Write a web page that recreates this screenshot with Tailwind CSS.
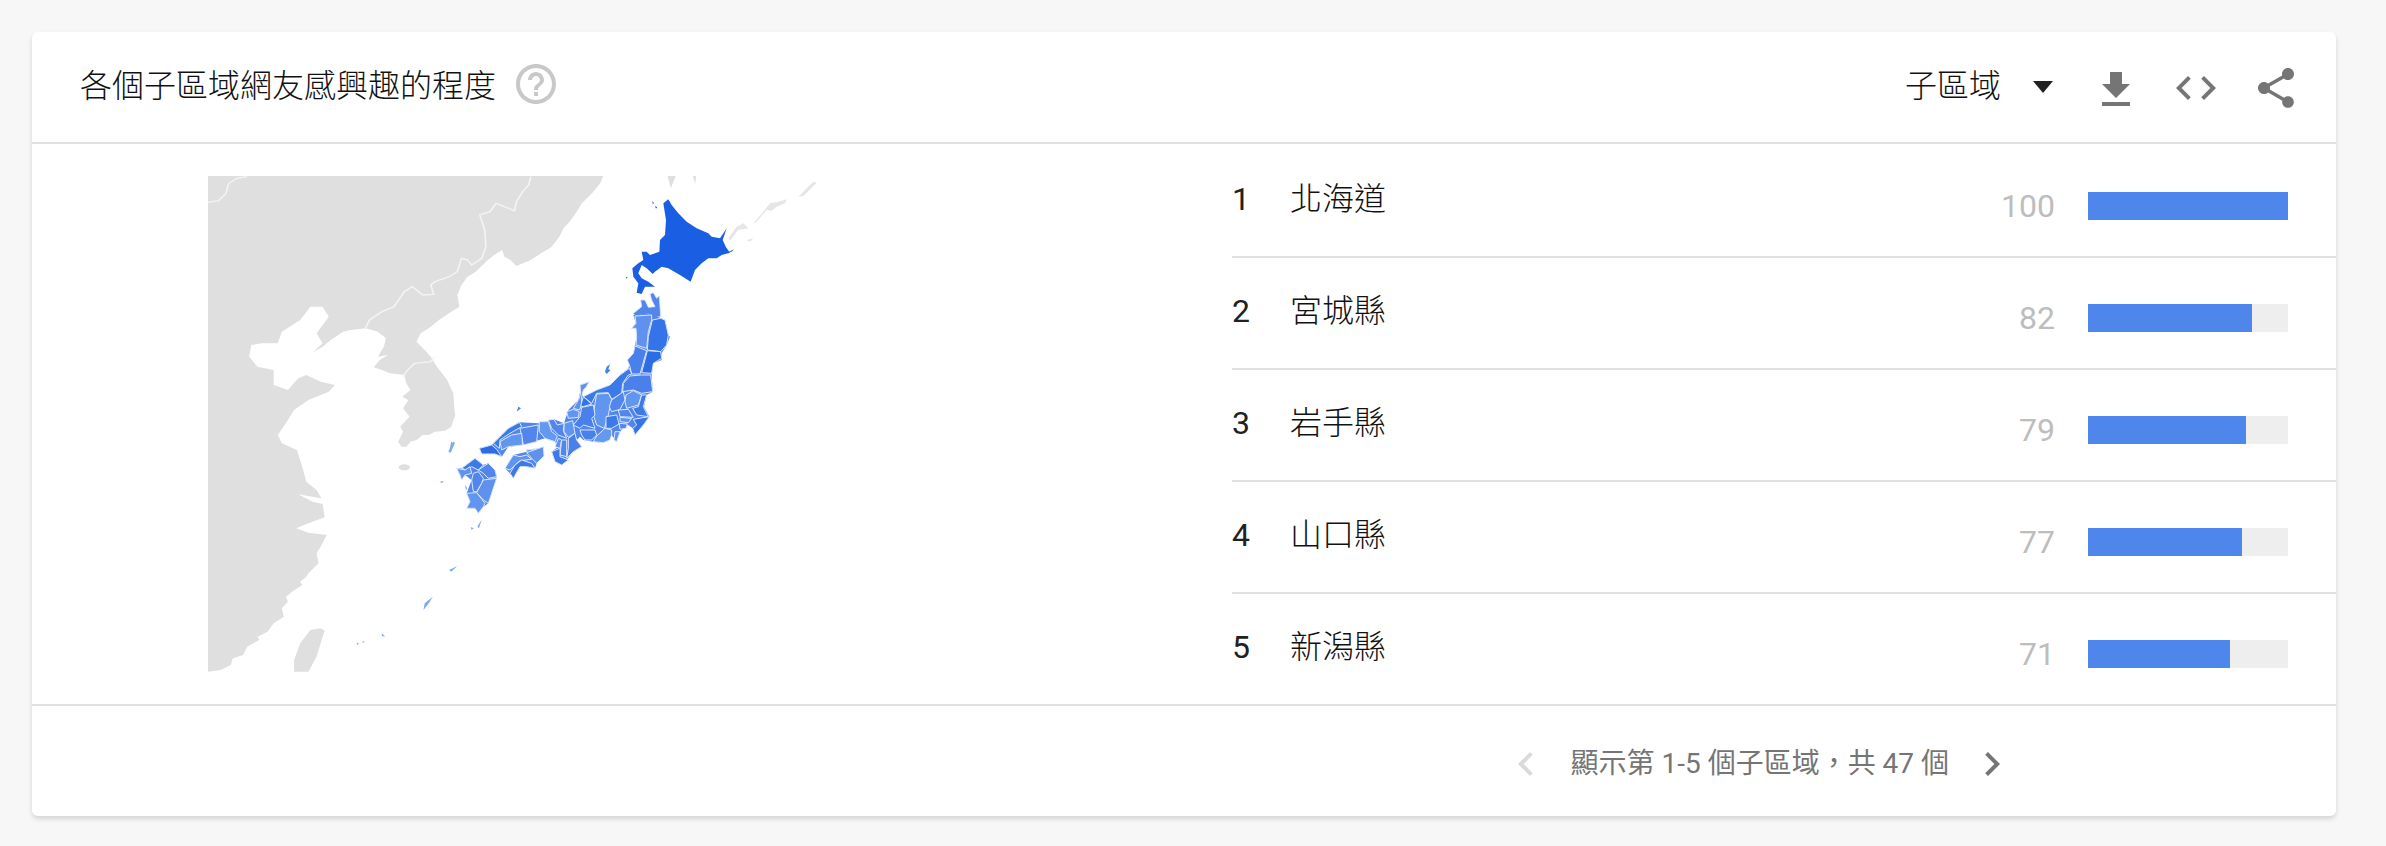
<!DOCTYPE html>
<html lang="zh-Hant">
<head>
    <meta charset="UTF-8">
    <title>各個子區域網友感興趣的程度</title>
    <script src="https://cdn.jsdelivr.net/npm/@tailwindcss/browser@4"></script>
</head>
<body class="bg-[#f7f7f7] font-['Roboto','Noto_Sans_CJK_TC',sans-serif] text-[#212121]">
    <main class="p-[32px]">
        <section class="w-[2304px] h-[784px] bg-white rounded-[6px] shadow-[0_3px_5px_rgba(0,0,0,0.14)]">
            <!-- header -->
            <header class="flex h-[112px] border-b-2 border-[#e0e0e0] pl-[48px] pr-[36px]">
                <h2 class="text-[32px] leading-[48px] font-light text-[#111111] mt-[30px]">各個子區域網友感興趣的程度</h2>
                <svg class="w-[48px] h-[48px] ml-[16px] mt-[28px] fill-[#c8c8c8]" viewBox="0 0 24 24"><path d="M11 18h2v-2h-2v2zm1-16C6.48 2 2 6.48 2 12s4.48 10 10 10 10-4.48 10-10S17.52 2 12 2zm0 18c-4.41 0-8-3.59-8-8s3.59-8 8-8 8 3.59 8 8-3.59 8-8 8zm0-14c-2.21 0-4 1.79-4 4h2c0-1.1.9-2 2-2s2 .9 2 2c0 2-3 1.75-3 5h2c0-2.25 3-2.5 3-5 0-2.21-1.79-4-4-4z"/></svg>
                <div class="ml-auto flex items-start pt-[32px]">
                    <span class="text-[32px] leading-[48px] font-light text-[#111111] -mt-[2px]">子區域</span>
                    <svg class="w-[48px] h-[48px] ml-[18px] -mt-[2px] fill-[#212121]" viewBox="0 0 24 24"><path d="M7 9.5l5 6 5-6z"/></svg>
                    <svg class="w-[48px] h-[48px] ml-[25px] mt-[2px] fill-[#757575]" viewBox="0 0 24 24"><path d="M19 9h-4V3H9v6H5l7 7 7-7zM5 18v2h14v-2H5z"/></svg>
                    <svg class="w-[48px] h-[48px] ml-[32px] fill-[#757575]" viewBox="0 0 24 24"><path d="M9.4 16.6L4.8 12l4.6-4.6L8 6l-6 6 6 6 1.4-1.4zm5.2 0l4.6-4.6-4.6-4.6L16 6l6 6-6 6-1.4-1.4z"/></svg>
                    <svg class="w-[48px] h-[48px] ml-[32px] fill-[#757575]" viewBox="0 0 24 24"><path d="M18 16.08c-.76 0-1.44.3-1.96.77L8.91 12.7c.05-.23.09-.46.09-.7s-.04-.47-.09-.7l7.05-4.11c.54.5 1.25.81 2.04.81 1.66 0 3-1.34 3-3s-1.34-3-3-3-3 1.34-3 3c0 .24.04.47.09.7L8.04 9.81C7.5 9.31 6.79 9 6 9c-1.66 0-3 1.34-3 3s1.34 3 3 3c.79 0 1.5-.31 2.04-.81l7.12 4.16c-.05.21-.08.43-.08.65 0 1.61 1.31 2.92 2.92 2.92 1.61 0 2.92-1.31 2.92-2.92s-1.31-2.92-2.92-2.92z"/></svg>
                </div>
            </header>

            <div class="flex h-[562px] border-b-2 border-[#e0e0e0]">
                <!-- map -->
                <div class="w-[1200px] pl-[158px] pt-[16px]">
                    <svg class="block" width="640" height="520" viewBox="190 160 640 520">
                        <!-- surrounding countries, traced at 2.45 x 3 -->
                        <g transform="translate(190 160) scale(0.40816 0.33333)">
                            <path fill="#dfdfdf" d="M44 48L1012 48L1005 70L985 100L960 130L945 160L930 185L915 205L905 230L885 262L860 280L835 300L800 318L785 300L770 290L765 270L745 285L730 300L700 335L680 350L665 375L655 405L660 440L640 455L610 480L585 505L565 520L555 545L575 570L590 590L605 620L630 660L645 700L648 750L650 765L640 800L625 812L600 815L585 825L570 825L555 840L540 845L530 860L518 860L510 845L522 815L515 800L530 780L538 770L522 745L535 720L520 710L540 690L530 670L525 645L490 640L470 630L450 622L465 600L485 585L460 590L475 560L480 535L460 515L430 505L395 510L375 515L345 540L325 560L300 578L325 550L310 520L340 470L325 440L295 440L270 480L225 515L215 550L175 550L150 555L145 590L165 620L205 630L205 675L240 690L265 655L285 645L320 665L355 675L340 695L290 720L255 750L235 790L215 825L225 850L262 870L275 920L285 965L310 990L322 1015L265 1003L300 1025L325 1032L330 1072L300 1085L260 1105L290 1118L335 1125L320 1160L310 1180L315 1210L290 1240L285 1250L270 1265L275 1275L250 1295L235 1310L240 1325L225 1345L230 1370L205 1390L190 1415L165 1430L170 1440L140 1460L130 1485L105 1495L100 1515L75 1530L44 1535Z"/>
                            <path fill="#dfdfdf" d="M320 1405L330 1412L325 1430L310 1490L290 1535L255 1535L255 1500L270 1450L295 1410Z"/>
                            <ellipse fill="#dfdfdf" cx="525" cy="922" rx="14" ry="9"/>
                            <path fill="#dfdfdf" d="M1170 48L1190 48L1178 85ZM1232 48L1240 48L1238 72Z"/>
                            <g fill="none" stroke="#f4f4f4" stroke-width="4">
                                <path d="M44 127L70 122L88 100L95 70L115 55L140 50"/>
                                <path d="M835 50L830 75L815 95L800 125L795 152L750 130L735 155L710 165L722 210L725 260L715 295L690 315L680 300L665 295L655 335L635 350L600 365L590 375L597 403L570 405L545 380L525 395L500 440L470 455L440 480L430 505"/>
                                <path d="M600 590L590 605L550 610L530 635L522 650"/>
                            </g>
                            <g fill="#7ea8f2">
                                <path d="M655 1218L640 1235L635 1230ZM595 1310L585 1330L572 1350L575 1330ZM408 1450L414 1448L410 1455ZM422 1445L428 1443L424 1449ZM470 1420L478 1430L470 1428ZM640 845L645 850L638 878L636 870Z"/>
                                <path d="M715 1078L708 1105L704 1100ZM688 1102L695 1104L690 1110Z"/>
                            </g>
                        </g>
                        <!-- hokkaido, kurils, aomori, traced at 3x -->
                        <g transform="translate(600 170) scale(0.33333)">
                            <g fill="#e6e6e6">
                                <path d="M640 35L650 38L610 78L595 80Z"/>
                                <path d="M560 88L555 100L530 110L515 122L500 120L470 155L460 160L490 125L510 100L535 95Z"/>
                                <path d="M430 160L445 175L415 180L390 212L385 205L410 170Z"/>
                                <path d="M460 205L450 215L440 210Z"/>
                            </g>
                            <path fill="#1a5fe3" d="M190 100L205 88L215 105L235 130L260 155L290 175L325 190L335 200L360 205L380 175L368 210L378 232L390 248L365 255L350 265L325 265L305 280L285 300L272 335L240 315L205 295L185 290L165 305L158 312L140 295L125 285L115 310L125 325L145 335L165 350L135 350L125 372L110 368L115 340L100 320L97 295L115 280L130 270L125 245L140 245L150 255L178 245L180 210L195 195L198 150Z"/>
                            <path fill="#1a5fe3" d="M157 92L162 100L158 102ZM165 108L172 112L168 116ZM78 322L84 320L78 326ZM402 238L395 245L385 246Z"/>
                            <path fill="#5386ec" stroke="#dce7fb" stroke-width="2.5" d="M150 372L160 368L170 385L178 378L182 440L152 442L148 432L105 438L100 430L125 410L122 390L135 390L145 412L165 410L155 390Z"/>
                        </g>
                        <!-- prefectures, traced at 3x -->
                        <g transform="translate(420 300) scale(0.33333)">
                            <!-- land under the prefecture shapes -->
                            <path fill="#5386ec" d="M640 45L695 40L722 55L735 60L745 105L750 110L740 135L725 160L725 180L700 190L695 225L698 275L680 285L672 320L688 350L670 375L645 405L638 385L625 375L610 385L600 395L590 425L575 405L550 428L520 425L490 420L480 410L470 420L485 440L460 455L440 480L425 495L405 485L395 455L415 440L405 425L375 415L340 425L310 435L265 440L245 470L225 462L185 462L178 445L215 435L265 385L298 367L355 370L385 362L402 358L432 370L445 330L475 300L480 278L490 290L530 270L570 255L600 225L625 205L640 160L650 110L648 85L635 85L648 70Z"/>
                            <path fill="#5386ec" d="M255 505L280 465L320 455L370 440L372 468L350 490L345 505L320 500L300 500L280 535L270 520Z"/>
                            <path fill="#5386ec" d="M110 505L125 505L165 475L190 495L205 490L225 510L230 530L205 610L190 620L175 640L165 625L140 625L150 605L140 580L155 540L135 525L125 540L120 525Z"/>
                            <g stroke="#dce7fb" stroke-width="3" stroke-linejoin="round">
                                <path fill="#5f92ee" d="M645 48L695 45L695 60L685 95L680 145L648 135L650 110L648 85L635 85L648 70Z"/>
                                <path fill="#3474e8" d="M697 60L722 55L735 60L745 105L740 135L722 155L682 150L685 110Z"/>
                                <path fill="#4a80ea" d="M645 138L680 152L672 180L660 222L635 222L630 200L622 180L640 160Z"/>
                                <path fill="#2c6de6" d="M682 152L722 155L725 175L700 190L695 220L665 218Z"/>
                                <path fill="#4a80ea" d="M630 228L665 225L692 225L698 275L665 280L640 270L608 275L610 250Z"/>
                                <path fill="#3c79e9" d="M625 225L608 250L605 280L575 298L565 278L530 280L515 310L490 290L530 270L570 255L600 225L628 205L635 222Z"/>
                                <path fill="#5f92ee" d="M480 255L508 245L498 262L490 270L485 290L485 315L478 330L460 325L478 295L482 278Z"/>
                                <path fill="#3474e8" d="M490 290L515 312L490 320L482 318Z"/>
                                <path fill="#6096ef" d="M530 282L565 280L575 298L570 320L565 345L553 385L530 375L520 345L525 310Z"/>
                                <path fill="#4a80ea" d="M485 322L520 315L525 345L515 355L525 385L490 375L480 385L460 375L480 350Z"/>
                                <path fill="#6096ef" d="M440 335L460 328L478 335L475 352L445 355Z"/>
                                <path fill="#4a80ea" d="M480 390L525 390L530 405L515 420L495 420L485 405Z"/>
                                <path fill="#6399f0" d="M530 408L555 385L575 390L575 405L570 420L550 428L520 425Z"/>
                                <path fill="#3c79e9" d="M558 350L590 345L597 372L575 385L558 385Z"/>
                                <path fill="#5386ec" d="M575 300L610 275L615 300L600 328L575 335L568 320Z"/>
                                <path fill="#6096ef" d="M618 285L640 272L665 285L655 315L620 325L615 305Z"/>
                                <path fill="#3c79e9" d="M665 285L680 285L670 320L685 350L650 345L638 325L655 320Z"/>
                                <path fill="#5386ec" d="M595 330L625 328L640 352L600 350Z"/>
                                <path fill="#5f92ee" d="M600 352L635 355L625 368L600 365Z"/>
                                <path fill="#5386ec" d="M598 370L622 372L618 385L600 388Z"/>
                                <path fill="#3474e8" d="M640 358L688 350L670 375L645 405L638 385L650 375Z"/>
                                <path fill="#5f92ee" d="M585 395L600 395L590 425L582 420Z"/>
                                <path fill="#6096ef" d="M432 370L458 362L465 400L445 412L432 395Z"/>
                                <path fill="#5386ec" d="M385 360L402 358L412 375L432 370L430 392L440 415L415 405L395 385Z"/>
                                <path fill="#6399f0" d="M358 365L385 365L395 395L412 408L405 425L375 415L358 395Z"/>
                                <path fill="#5386ec" d="M300 385L355 375L350 425L310 435Z"/>
                                <path fill="#6096ef" d="M240 425L275 405L305 400L308 435L265 440L245 450Z"/>
                                <path fill="#3c79e9" d="M220 430L265 385L298 367L305 380L270 400L240 420L238 445Z"/>
                                <path fill="#2c6de6" d="M178 445L215 435L230 448L245 470L225 462L185 462Z"/>
                                <path fill="#4a80ea" d="M445 415L465 400L470 420L485 440L460 455L440 475L445 445Z"/>
                                <path fill="#5f92ee" d="M415 415L425 420L420 445L405 440Z"/>
                                <path fill="#5386ec" d="M425 420L440 420L440 470L420 465Z"/>
                                <path fill="#3c79e9" d="M395 455L420 445L420 470L445 480L425 495L405 485Z"/>
                                <path fill="#6096ef" d="M255 505L280 465L300 470L320 465L335 478L300 482L280 500L270 510Z"/>
                                <path fill="#6096ef" d="M318 450L360 445L365 452L325 462Z"/>
                                <path fill="#5f92ee" d="M320 458L370 440L372 468L350 490L338 478Z"/>
                                <path fill="#3c79e9" d="M270 520L285 495L305 480L335 490L345 505L320 500L300 500L280 535Z"/>
                                <path fill="#3c79e9" d="M125 505L165 475L190 495L175 510L155 500L140 510Z"/>
                                <path fill="#5386ec" d="M175 510L205 490L225 510L230 530L205 535L190 520Z"/>
                                <path fill="#5f92ee" d="M110 505L135 510L150 500L155 520L135 525L125 540L120 525Z"/>
                                <path fill="#5386ec" d="M160 520L175 515L190 535L185 550L170 575L160 575L155 540Z"/>
                                <path fill="#5f92ee" d="M190 540L230 535L205 610L190 600L170 578Z"/>
                                <path fill="#6096ef" d="M140 580L170 578L195 610L190 620L175 640L165 625L140 625L150 605Z"/>
                            </g>
                            <g fill="#4a80ea">
                                <path d="M560 200L570 193L565 208L572 210L560 222L555 215Z"/>
                                <path d="M295 320L303 325L290 335Z"/>
                            </g>
                            <g fill="#7ea8f2">
                                <path d="M60 545L72 543L65 550ZM135 555L142 565L138 570ZM85 455L100 425L105 428L92 458Z"/>
                            </g>
                        </g>
                    </svg>
                </div>

                <!-- ranked list -->
                <ol class="flex-1 pt-[2px]">
                    <li class="flex items-start h-[112px] border-b-2 border-[#e0e0e0] pr-[48px] pt-[29px]">
                        <span class="w-[58px] text-[32px] leading-[48px]">1</span>
                        <span class="text-[32px] leading-[48px] font-light text-[#111111]">北海道</span>
                        <span class="ml-auto mt-[7px] text-[32px] leading-[48px] text-[#bdbdbd]">100</span>
                        <div class="w-[200px] h-[28px] ml-[33px] mt-[17px] bg-[#eeeeee]"><div class="h-full w-[100%] bg-[#4f86ec]"></div></div>
                    </li>
                    <li class="flex items-start h-[112px] border-b-2 border-[#e0e0e0] pr-[48px] pt-[29px]">
                        <span class="w-[58px] text-[32px] leading-[48px]">2</span>
                        <span class="text-[32px] leading-[48px] font-light text-[#111111]">宮城縣</span>
                        <span class="ml-auto mt-[7px] text-[32px] leading-[48px] text-[#bdbdbd]">82</span>
                        <div class="w-[200px] h-[28px] ml-[33px] mt-[17px] bg-[#eeeeee]"><div class="h-full w-[82%] bg-[#4f86ec]"></div></div>
                    </li>
                    <li class="flex items-start h-[112px] border-b-2 border-[#e0e0e0] pr-[48px] pt-[29px]">
                        <span class="w-[58px] text-[32px] leading-[48px]">3</span>
                        <span class="text-[32px] leading-[48px] font-light text-[#111111]">岩手縣</span>
                        <span class="ml-auto mt-[7px] text-[32px] leading-[48px] text-[#bdbdbd]">79</span>
                        <div class="w-[200px] h-[28px] ml-[33px] mt-[17px] bg-[#eeeeee]"><div class="h-full w-[79%] bg-[#4f86ec]"></div></div>
                    </li>
                    <li class="flex items-start h-[112px] border-b-2 border-[#e0e0e0] pr-[48px] pt-[29px]">
                        <span class="w-[58px] text-[32px] leading-[48px]">4</span>
                        <span class="text-[32px] leading-[48px] font-light text-[#111111]">山口縣</span>
                        <span class="ml-auto mt-[7px] text-[32px] leading-[48px] text-[#bdbdbd]">77</span>
                        <div class="w-[200px] h-[28px] ml-[33px] mt-[17px] bg-[#eeeeee]"><div class="h-full w-[77%] bg-[#4f86ec]"></div></div>
                    </li>
                    <li class="flex items-start h-[112px] pr-[48px] pt-[29px]">
                        <span class="w-[58px] text-[32px] leading-[48px]">5</span>
                        <span class="text-[32px] leading-[48px] font-light text-[#111111]">新潟縣</span>
                        <span class="ml-auto mt-[7px] text-[32px] leading-[48px] text-[#bdbdbd]">71</span>
                        <div class="w-[200px] h-[28px] ml-[33px] mt-[17px] bg-[#eeeeee]"><div class="h-full w-[71%] bg-[#4f86ec]"></div></div>
                    </li>
                </ol>
            </div>

            <!-- pagination -->
            <footer class="flex justify-end items-start pt-[34px] pr-[320px]">
                <svg class="w-[48px] h-[48px] fill-[#dadada]" viewBox="0 0 24 24"><path d="M15.41 7.41L14 6l-6 6 6 6 1.41-1.41L10.83 12z"/></svg>
                <span class="ml-[21px] mr-[19px] text-[28px] leading-[48px] text-[#757575]">顯示第 1-5 個子區域，共 47 個</span>
                <svg class="w-[48px] h-[48px] fill-[#757575]" viewBox="0 0 24 24"><path d="M10 6L8.59 7.41 13.17 12l-4.58 4.59L10 18l6-6z"/></svg>
            </footer>
        </section>
    </main>
</body>
</html>
